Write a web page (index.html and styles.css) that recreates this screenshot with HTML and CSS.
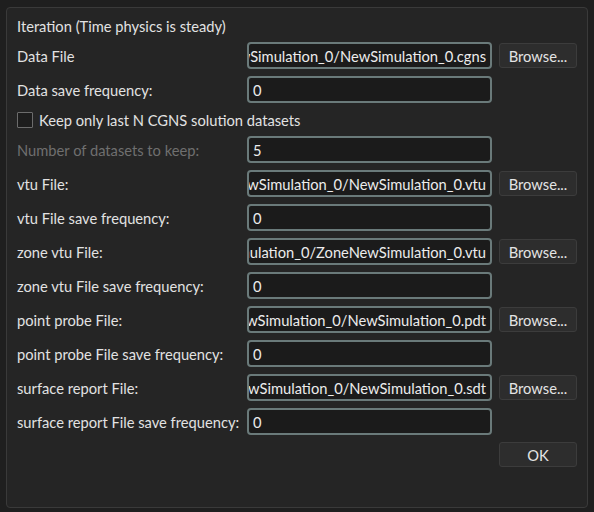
FILE: index.html
```html
<!DOCTYPE html>
<html>
<head>
<meta charset="utf-8">
<link rel="stylesheet" href="styles.css">
</head>
<body>
<div class="group">
  <div class="title">Iteration (Time physics is steady)</div>
  <div class="form">
    <div class="label">Data File</div>
    <div class="field"><span>NewSimulation_0/NewSimulation_0.cgns</span></div>
    <div class="btn">Browse...</div>

    <div class="label">Data save frequency:</div>
    <div class="field"><span>0</span></div>
    <div></div>

    <div class="check-row">
      <div class="box"></div>
      <span>Keep only last N CGNS solution datasets</span>
    </div>

    <div class="label disabled">Number of datasets to keep:</div>
    <div class="field"><span>5</span></div>
    <div></div>

    <div class="label">vtu File:</div>
    <div class="field"><span>NewSimulation_0/NewSimulation_0.vtu</span></div>
    <div class="btn">Browse...</div>

    <div class="label">vtu File save frequency:</div>
    <div class="field"><span>0</span></div>
    <div></div>

    <div class="label">zone vtu File:</div>
    <div class="field"><span>NewSimulation_0/ZoneNewSimulation_0.vtu</span></div>
    <div class="btn">Browse...</div>

    <div class="label">zone vtu File save frequency:</div>
    <div class="field"><span>0</span></div>
    <div></div>

    <div class="label">point probe File:</div>
    <div class="field"><span>NewSimulation_0/NewSimulation_0.pdt</span></div>
    <div class="btn">Browse...</div>

    <div class="label">point probe File save frequency:</div>
    <div class="field"><span>0</span></div>
    <div></div>

    <div class="label">surface report File:</div>
    <div class="field"><span>NewSimulation_0/NewSimulation_0.sdt</span></div>
    <div class="btn">Browse...</div>

    <div class="label">surface report File save frequency:</div>
    <div class="field"><span>0</span></div>
    <div></div>

    <div></div>
    <div></div>
    <div class="btn ok">OK</div>
  </div>
</div>
</body>
</html>
```

FILE: styles.css
```css
html, body {
  margin: 0;
  padding: 0;
  background: #1f1f1f;
}
body {
  padding: 7px 0 0 6px;
  font-family: "Lato", "Noto Sans", sans-serif;
  font-size: 14.7px;
  color: #e2e2e2;
}
.group {
  box-sizing: border-box;
  width: 582px;
  height: 501px;
  border: 1px solid #3a3a3a;
  border-radius: 4px;
  background: #252525;
  padding: 8px 9px 0 10px;
}
.title {
  height: 20px;
  line-height: 20px;
  margin-bottom: 6px;
}
.form {
  display: grid;
  grid-template-columns: 223px 245px 78px;
  grid-auto-rows: auto;
  column-gap: 7px;
  row-gap: 7px;
  align-items: center;
}
.label {
  white-space: nowrap;
  line-height: 20px;
}
.label.disabled {
  color: #6f6f6f;
}
.field {
  box-sizing: border-box;
  height: 27px;
  border: 2px solid #6a7a7a;
  border-radius: 4px;
  background: #1b1b1b;
  display: flex;
  justify-content: flex-end;
  align-items: center;
  overflow: hidden;
  white-space: nowrap;
  padding: 0 4px 0 4px;
  color: #ececec;
}
.field span {
  flex: none;
  min-width: 100%;
}
.btn {
  box-sizing: border-box;
  height: 25px;
  border: 1px solid #3c3c3c;
  border-radius: 3px;
  background: #2d2d2d;
  display: flex;
  align-items: center;
  justify-content: center;
  color: #e4e4e4;
}
.check-row {
  grid-column: 1 / 4;
  height: 19px;
  display: flex;
  align-items: center;
  gap: 6px;
}
.box {
  box-sizing: border-box;
  width: 16px;
  height: 16px;
  border: 1px solid #6c6c6c;
  background: #1d1d1d;
  border-radius: 1px;
}
```
